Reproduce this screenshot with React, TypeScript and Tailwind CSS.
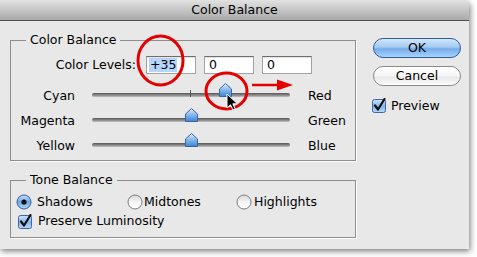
import React from "react";

type SliderRow = { left: string; right: string; value: number };

const SLIDERS: SliderRow[] = [
  { left: "Cyan", right: "Red", value: 35 },
  { left: "Magenta", right: "Green", value: 0 },
  { left: "Yellow", right: "Blue", value: 0 },
];

function Thumb() {
  return (
    <svg width="13" height="14" viewBox="0 0 13 14">
      <defs>
        <linearGradient id="thumbGrad" x1="0" y1="0" x2="0" y2="1">
          <stop offset="0" stopColor="#e2f0ff" />
          <stop offset="0.45" stopColor="#8dbdf0" />
          <stop offset="1" stopColor="#3b82d6" />
        </linearGradient>
      </defs>
      <path d="M6.5 0.5 L12.5 6 V13.5 H0.5 V6 Z" fill="url(#thumbGrad)" stroke="#3a64a0" />
    </svg>
  );
}

function CheckBox() {
  return (
    <svg width="15" height="15" viewBox="0 0 15 15" className="shrink-0">
      <defs>
        <linearGradient id="boxGrad" x1="0" y1="0" x2="0" y2="1">
          <stop offset="0" stopColor="#cfe4fb" />
          <stop offset="0.5" stopColor="#83b6ec" />
          <stop offset="1" stopColor="#b6dafc" />
        </linearGradient>
      </defs>
      <rect x="0.5" y="1.5" width="13" height="13" rx="2" fill="url(#boxGrad)" stroke="#3f68a3" />
      <path d="M3 7.5 L6 11.5 L12.5 1" fill="none" stroke="#111" strokeWidth="2.2" strokeLinecap="round" strokeLinejoin="round" />
    </svg>
  );
}

function Radio({ on }: { on?: boolean }) {
  if (on) {
    return (
      <svg width="16" height="16" viewBox="0 0 16 16" className="shrink-0">
        <defs>
          <linearGradient id="radioOn" x1="0" y1="0" x2="0" y2="1">
            <stop offset="0" stopColor="#c9e1fa" />
            <stop offset="0.5" stopColor="#6ea7e6" />
            <stop offset="1" stopColor="#b3d8fc" />
          </linearGradient>
        </defs>
        <circle cx="8" cy="8" r="7" fill="url(#radioOn)" stroke="#355f9c" />
        <circle cx="8" cy="8" r="2.6" fill="#111" />
      </svg>
    );
  }
  return (
    <svg width="16" height="16" viewBox="0 0 16 16" className="shrink-0">
      <defs>
        <linearGradient id="radioOff" x1="0" y1="0" x2="0" y2="1">
          <stop offset="0" stopColor="#d6d6d6" />
          <stop offset="0.5" stopColor="#f4f4f4" />
          <stop offset="1" stopColor="#ffffff" />
        </linearGradient>
      </defs>
      <circle cx="8" cy="8" r="7" fill="url(#radioOff)" stroke="#7d7d7d" />
    </svg>
  );
}

function Slider({ value }: { value: number }) {
  const left = 99 + value * 0.99 - 6.5;
  return (
    <div className="relative ml-[17px] h-[25px] w-[198px]">
      <div className="absolute left-0 top-[10px] h-[4px] w-full rounded-full bg-[linear-gradient(to_bottom,#575757,#8f8f8f_60%,#c4c4c4)]" />
      <div className="absolute left-[98px] top-[7px] h-[7px] w-[1px] bg-[#555]" />
      <div className="absolute top-0" style={{ left }}>
        <Thumb />
      </div>
    </div>
  );
}

function LevelBox({ children }: { children: React.ReactNode }) {
  return (
    <div className="flex h-[18px] w-[50px] items-center border border-[#a3a3a3] border-t-[#6f6f6f] bg-white pl-[2px] shadow-[inset_0_1px_1px_rgba(0,0,0,0.12)]">
      {children}
    </div>
  );
}

export default function App() {
  return (
    <div className="relative h-[257px] w-[477px] overflow-hidden bg-white font-['DejaVu_Sans',sans-serif] text-[12.5px] leading-[16px] text-black">
      <div className="flex h-[249px] w-[469px] flex-col rounded-tr-[6px] bg-[#e8e8e8] shadow-[1px_2px_6px_rgba(0,0,0,0.55)]">
        {/* Title bar */}
        <div className="flex h-[21px] shrink-0 items-center justify-center rounded-tr-[6px] border-b border-[#515151] bg-[linear-gradient(to_bottom,#e2e2e2,#a9a9a9)] pb-[1px]">
          Color Balance
        </div>

        <div className="flex pl-[10px]">
          {/* Left column */}
          <div className="flex w-[346px] flex-col pt-[11px]">
            <fieldset className="border border-[#8e8e8e] shadow-[1px_1px_0_#fff]">
              <legend className="ml-[15px] px-[4px]">Color Balance</legend>
              <div className="flex flex-col pb-[2px] pt-[8px]">
                <div className="flex h-[18px] items-center">
                  <div className="w-[125px] text-right">Color Levels:</div>
                  <div className="ml-[10px] flex gap-[8px]">
                    <LevelBox>
                      <span className="bg-[#b5d5fd] px-[1px] leading-[14px]">+35</span>
                    </LevelBox>
                    <LevelBox>
                      <span className="pl-[2px]">0</span>
                    </LevelBox>
                    <LevelBox>
                      <span className="pl-[2px]">0</span>
                    </LevelBox>
                  </div>
                </div>

                <div className="mt-[9px] flex flex-col">
                  {SLIDERS.map((s) => (
                    <div key={s.left} className="flex h-[25px] items-center">
                      <div className="w-[64px] text-right">{s.left}</div>
                      <Slider value={s.value} />
                      <div className="ml-[18px]">{s.right}</div>
                    </div>
                  ))}
                </div>
              </div>
            </fieldset>

            <fieldset className="mt-[11px] border border-[#8e8e8e] shadow-[1px_1px_0_#fff]">
              <legend className="ml-[15px] px-[4px]">Tone Balance</legend>
              <div className="flex flex-col pb-[8px] pt-[6px]">
                <div className="flex h-[16px] items-center pl-[5px]">
                  <div className="flex w-[111px] items-center gap-[5px]">
                    <Radio on />
                    <span>Shadows</span>
                  </div>
                  <div className="flex w-[109px] items-center gap-[1px]">
                    <Radio />
                    <span>Midtones</span>
                  </div>
                  <div className="flex items-center gap-[2px]">
                    <Radio />
                    <span>Highlights</span>
                  </div>
                </div>
                <div className="mt-[3px] flex h-[16px] items-center gap-[5px] pl-[7px]">
                  <CheckBox />
                  <span>Preserve Luminosity</span>
                </div>
              </div>
            </fieldset>
          </div>

          {/* Right column */}
          <div className="ml-[17px] flex w-[88px] flex-col pt-[17px]">
            <button className="flex h-[20px] items-center justify-center rounded-full border border-[#2f5c9c] bg-[linear-gradient(to_bottom,#d3e7fb_0%,#a3cbf3_45%,#75acea_55%,#a8d3fb_100%)]">
              OK
            </button>
            <button className="mt-[8px] flex h-[20px] items-center justify-center rounded-full border border-[#8a8a8a] bg-[linear-gradient(to_bottom,#ffffff_0%,#f6f6f6_50%,#e9e9e9_55%,#fbfbfb_100%)]">
              Cancel
            </button>
            <div className="mt-[12px] flex h-[15px] items-center gap-[4px] -ml-[1px]">
              <CheckBox />
              <span>Preview</span>
            </div>
          </div>
        </div>
      </div>

      {/* Annotation overlay */}
      <svg className="pointer-events-none absolute left-0 top-0" width="477" height="257" viewBox="0 0 477 257">
        <ellipse cx="160.5" cy="60.5" rx="22.5" ry="24.5" fill="none" stroke="#e50000" strokeWidth="3" />
        <ellipse cx="226.5" cy="91" rx="20.5" ry="18" fill="none" stroke="#e50000" strokeWidth="3" />
        <line x1="252" y1="85" x2="280" y2="85" stroke="#e50000" strokeWidth="2.5" />
        <polygon points="277,79.5 293,85 277,90.5" fill="#e50000" />
        <path
          transform="translate(227 94)"
          d="M0 0 L0 14 L3.5 10.8 L6 16 L8.3 15 L5.8 9.8 L10.5 9.8 Z"
          fill="#000"
          stroke="#fff"
          strokeWidth="1"
          strokeLinejoin="round"
        />
      </svg>
    </div>
  );
}
